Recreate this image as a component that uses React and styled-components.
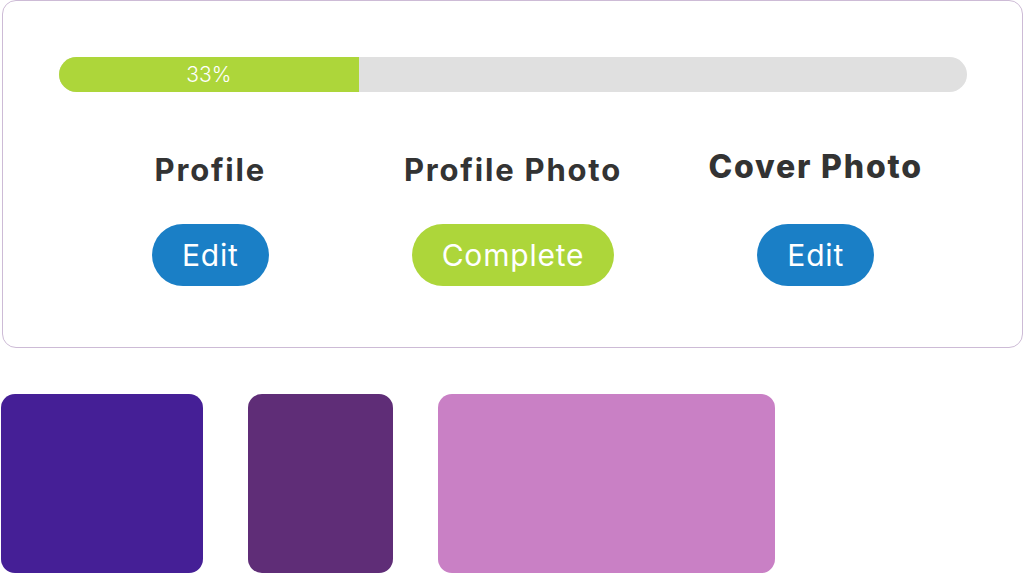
import styled, { createGlobalStyle } from "styled-components";

const steps = [
    { title: "Profile", label: "Edit", done: false },
    { title: "Profile Photo", label: "Complete", done: true },
    { title: "Cover Photo", label: "Edit", done: false, big: true },
];

const swatches = [
    { color: "#451f96", width: 202 },
    { color: "#5f2d77", width: 145 },
    { color: "#c980c5", width: 337 },
];

const App = () => {
    const percent = 33;
    return (
        <Page>
            <GlobalStyle />
            <Card>
                <Track>
                    <Fill style={{ width: `${percent}%` }}>{percent}%</Fill>
                </Track>
                <Steps>
                    {steps.map((s) => (
                        <Step key={s.title}>
                            <StepTitle $big={s.big}>{s.title}</StepTitle>
                            <StepButton $done={s.done}>{s.label}</StepButton>
                        </Step>
                    ))}
                </Steps>
            </Card>
            <Swatches>
                {swatches.map((s) => (
                    <Swatch key={s.color} $color={s.color} $width={s.width} />
                ))}
            </Swatches>
        </Page>
    );
};

export default App;

const GlobalStyle = createGlobalStyle`
  body {
    margin: 0;
    background: #ffffff;
    font-family: Inter, "Noto Sans", sans-serif;
  }
`;

const Page = styled.div`
  width: 1024px;
  height: 573px;
  overflow: hidden;
  display: flex;
  flex-direction: column;
  gap: 46px;
`;

const Card = styled.div`
  margin: 0 1px 0 2px;
  height: 348px;
  box-sizing: border-box;
  border: 1.5px solid #cdbbd6;
  border-radius: 14px;
  padding: 56px 55px 0 56px;
`;

const Track = styled.div`
  height: 35px;
  background: #e0e0e0;
  border-radius: 18px;
  overflow: hidden;
  display: flex;
`;

const Fill = styled.div`
  background: #add63a;
  color: #ffffff;
  font-size: 21px;
  font-weight: 300;
  display: flex;
  align-items: center;
  justify-content: center;
`;

const Steps = styled.div`
  display: grid;
  grid-template-columns: repeat(3, 1fr);
  margin-top: 60px;
`;

const Step = styled.div`
  display: flex;
  flex-direction: column;
  align-items: center;
  gap: 36px;
`;

const StepTitle = styled.div`
  color: #333333;
  font-size: ${(p) => (p.$big ? "32px" : "31px")};
  font-weight: ${(p) => (p.$big ? 800 : 700)};
  letter-spacing: ${(p) => (p.$big ? "1.8px" : "1.8px")};
  line-height: 36px;
  margin-top: ${(p) => (p.$big ? "-3px" : "0")};
  margin-bottom: ${(p) => (p.$big ? "3px" : "0")};
`;

const StepButton = styled.button`
  height: 62px;
  padding: 0 30px;
  border: none;
  border-radius: 31px;
  background: ${(p) => (p.$done ? "#add63a" : "#1a7fc6")};
  color: #ffffff;
  font-family: Inter, "Noto Sans", sans-serif;
  font-size: 30px;
  font-weight: 400;
  letter-spacing: 0.8px;
`;

const Swatches = styled.div`
  display: flex;
  gap: 45px;
  padding-left: 1px;
`;

const Swatch = styled.div`
  width: ${(p) => p.$width}px;
  height: 179px;
  background: ${(p) => p.$color};
  border-radius: 14px;
`;
